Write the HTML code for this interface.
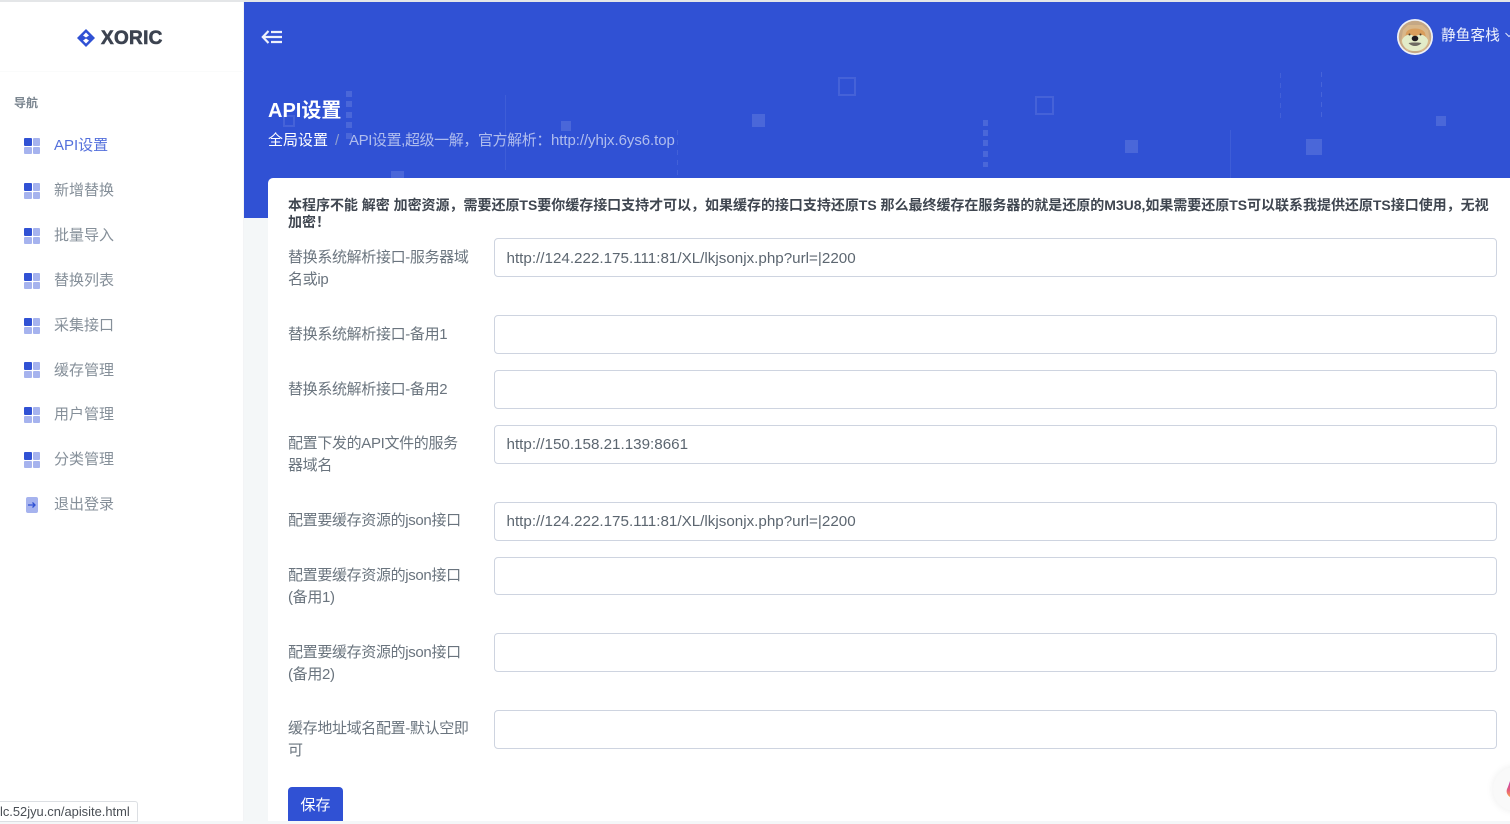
<!DOCTYPE html>
<html lang="zh"><head><meta charset="utf-8"><title>API设置</title>
<style>
*{box-sizing:border-box}
html,body{margin:0;padding:0;width:1510px;height:821px;overflow:hidden;background:#f4f7f8;font-family:"Liberation Sans","Noto Sans CJK SC",sans-serif;color:#6c757d}
.a{position:absolute;white-space:nowrap}
#top{left:0;top:0;width:1510px;height:2px;background:#e4e6e8}
#side{left:0;top:2px;width:244px;height:819px;background:#fff;border-right:1px solid #f3f4f6}
#hero{left:244px;top:2px;width:1266px;height:216px;background:#3051d4}
.d{position:absolute;background:rgba(255,255,255,.13)}
.l{position:absolute;background:rgba(255,255,255,.07)}
.o{position:absolute;border:2px solid rgba(255,255,255,.1)}
.nav{left:54px;font-size:15px;line-height:22px;color:#858f99}
.ic{position:absolute;left:24px;width:16px;height:16px}
.ic i{position:absolute;width:7.5px;height:7.5px;background:#a6b3ee;border-radius:1px}
.ic i:nth-child(1){left:0;top:0;background:#3051d4}.ic i:nth-child(2){left:8.5px;top:0}.ic i:nth-child(3){left:0;top:8.5px}.ic i:nth-child(4){left:8.5px;top:8.5px}
#card{left:268px;top:178px;width:1242px;height:643px;background:#fff;border-radius:5px 0 0 0}
.lb{left:288px;font-size:15px;line-height:22px;color:#6a747e;letter-spacing:-.34px}
.in{left:494px;width:1003px;height:39px;background:#fff;border:1px solid #ced4e0;border-radius:4px;padding:0 11.5px;line-height:38px;font-size:15.2px;color:#5c6670}
</style></head><body>
<div class="a" id="top"></div>
<div class="a" id="side"></div>
<div class="a" style="left:0;top:71px;width:244px;height:1px;background:#fafbfb"></div>
<svg class="a" style="left:76px;top:28px" width="20" height="20" viewBox="0 0 20 20"><path d="M10 1L19 10 10 19 1 10Z" fill="#3051d4"/><path d="M10 4.500L13 7.500 10 9.500 7 7.500ZM10 15.500L13 12.500 10 10.500 7 12.500Z" fill="#fff"/></svg>
<div class="a" style="left:101px;top:27px;font-size:19px;line-height:24px;font-weight:700;color:#3c4350;letter-spacing:.3px;-webkit-text-stroke:.6px #3c4350">XORIC</div>
<div class="a" style="left:14px;top:95px;font-size:12px;line-height:17px;font-weight:700;color:#7b8690">导航</div>

<div class="ic" style="top:138px"><i></i><i></i><i></i><i></i></div><div class="a nav" style="top:135px;color:#5470dc">API设置</div>
<div class="ic" style="top:183px"><i></i><i></i><i></i><i></i></div><div class="a nav" style="top:180px">新增替换</div>
<div class="ic" style="top:228px"><i></i><i></i><i></i><i></i></div><div class="a nav" style="top:225px">批量导入</div>
<div class="ic" style="top:273px"><i></i><i></i><i></i><i></i></div><div class="a nav" style="top:270px">替换列表</div>
<div class="ic" style="top:318px"><i></i><i></i><i></i><i></i></div><div class="a nav" style="top:315px">采集接口</div>
<div class="ic" style="top:362px"><i></i><i></i><i></i><i></i></div><div class="a nav" style="top:360px">缓存管理</div>
<div class="ic" style="top:407px"><i></i><i></i><i></i><i></i></div><div class="a nav" style="top:404px">用户管理</div>
<div class="ic" style="top:452px"><i></i><i></i><i></i><i></i></div><div class="a nav" style="top:449px">分类管理</div>
<svg class="a" style="left:26px;top:497px" width="12" height="16" viewBox="0 0 12 16"><rect width="12" height="16" rx="2" fill="#a6b3ee"/><path d="M2 8H9M6.500 5.500L9 8 6.500 10.500" fill="none" stroke="#3051d4" stroke-width="1.3"/></svg>
<div class="a nav" style="top:494px">退出登录</div>

<div class="a" id="hero"></div>
<div class="d" style="left:752px;top:114px;width:13px;height:13px"></div>
<div class="o" style="left:838px;top:77px;width:18px;height:19px"></div>
<div class="o" style="left:1035px;top:96px;width:19px;height:19px"></div>
<div class="d" style="left:983px;top:120px;width:5px;height:6px"></div>
<div class="d" style="left:983px;top:130px;width:5px;height:6px"></div>
<div class="d" style="left:983px;top:140px;width:5px;height:6px"></div>
<div class="d" style="left:983px;top:151px;width:5px;height:6px"></div>
<div class="d" style="left:983px;top:162px;width:5px;height:5px"></div>
<div class="d" style="left:1125px;top:140px;width:13px;height:13px"></div>
<div class="l" style="left:1230px;top:130px;width:1px;height:48px"></div>
<div class="a" style="left:1280px;top:73px;width:1px;height:47px;background:repeating-linear-gradient(180deg,rgba(255,255,255,.09) 0 5px,transparent 5px 10px)"></div>
<div class="a" style="left:1321px;top:72px;width:1px;height:47px;background:repeating-linear-gradient(180deg,rgba(255,255,255,.11) 0 5px,transparent 5px 10px)"></div>
<div class="d" style="left:1306px;top:139px;width:16px;height:16px"></div>
<div class="d" style="left:1436px;top:116px;width:10px;height:10px"></div>
<div class="d" style="left:346px;top:91px;width:6px;height:6px"></div>
<div class="d" style="left:346px;top:101px;width:6px;height:6px"></div>
<div class="d" style="left:346px;top:112px;width:6px;height:6px"></div>
<div class="d" style="left:346px;top:122px;width:6px;height:6px"></div>
<div class="d" style="left:346px;top:133px;width:6px;height:6px"></div>
<div class="o" style="left:283px;top:115px;width:12px;height:12px"></div>
<div class="d" style="left:561px;top:121px;width:10px;height:10px"></div>
<div class="d" style="left:391px;top:171px;width:13px;height:7px"></div>
<div class="l" style="left:505px;top:95px;width:1px;height:75px"></div>
<div class="a" style="left:677px;top:130px;width:1px;height:48px;background:repeating-linear-gradient(180deg,rgba(255,255,255,.09) 0 5px,transparent 5px 10px)"></div>

<svg class="a" style="left:261px;top:29px" width="21" height="16" viewBox="0 0 21 16"><path d="M7.500 2L1.800 8 7.500 14M2 8H21M10 3H21M10 13H21" fill="none" stroke="#eef1fc" stroke-width="2.200"/></svg>
<svg class="a" style="left:1397px;top:19px" width="36" height="36" viewBox="0 0 36 36">
<defs><clipPath id="c"><circle cx="18" cy="18" r="16.300"/></clipPath></defs>
<circle cx="18" cy="18" r="18" fill="#eef0f6"/>
<g clip-path="url(#c)"><rect width="36" height="36" fill="#c5a885"/>
<path d="M6 11L11 6 25 6 31 11 33 23 27 32 10 32 4 23Z" fill="#d8b78a"/>
<path d="M9 14C11 8 25 8 28 14L29 19 8 19Z" fill="#d99e5c"/>
<path d="M5 21C8 15 14 14 18 18 22 14 28 15 31 21 31 28 25 32 18 32 11 32 5 28 5 21Z" fill="#e3ecc9"/>
<circle cx="12.500" cy="15.500" r="1" fill="#4a3a2a"/><circle cx="23.500" cy="15.500" r="1" fill="#4a3a2a"/>
<ellipse cx="18" cy="19.500" rx="3.300" ry="2.800" fill="#1d1a20"/><path d="M11.500 24C15 28 21 28 24.500 24L21 23.500H15Z" fill="#6d6a62"/></g></svg>
<div class="a" style="left:1441px;top:26px;font-size:14.700px;line-height:21px;color:#eef1fc">静鱼客栈</div>
<svg class="a" style="left:1505px;top:32px" width="5" height="6" viewBox="0 0 5 6"><path d="M.5 1L4 4.500 5 3.500" fill="none" stroke="#dfe5fa" stroke-width="1"/></svg>

<div class="a" style="left:268px;top:97px;font-size:20px;line-height:28px;font-weight:700;color:#fff">API设置</div>
<div class="a" style="left:268px;top:130px;font-size:15px;line-height:22px;color:#fff">全局设置</div>
<div class="a" style="left:335px;top:130px;font-size:15px;line-height:22px;color:#8f9fd0">/</div>
<div class="a" style="left:349px;top:130px;font-size:15px;line-height:22px;color:#b0bdee;letter-spacing:-.4px">API设置,超级一解，官方解析：<span style="letter-spacing:-.06px">http://yhjx.6ys6.top</span></div>

<div class="a" id="card"></div>
<div class="a" style="left:288px;top:197px;width:1212px;white-space:normal;font-size:14px;line-height:17px;font-weight:700;color:#3f4650;letter-spacing:-.02px">本程序不能 解密 加密资源，需要还原TS要你缓存接口支持才可以，如果缓存的接口支持还原TS 那么最终缓存在服务器的就是还原的M3U8,如果需要还原TS可以联系我提供还原TS接口使用，无视<br>加密！</div>

<div class="a lb" style="top:247px">替换系统解析接口-服务器域<br>名或ip</div>
<div class="a in" style="top:238px;line-height:39px">http://124.222.175.111:81/XL/lkjsonjx.php?url=|2200</div>
<div class="a lb" style="top:324px">替换系统解析接口-备用1</div>
<div class="a in" style="top:315px"></div>
<div class="a lb" style="top:379px">替换系统解析接口-备用2</div>
<div class="a in" style="top:370px"></div>
<div class="a lb" style="top:433px">配置下发的API文件的服务<br>器域名</div>
<div class="a in" style="top:425px">http://150.158.21.139:8661</div>
<div class="a lb" style="top:510px">配置要缓存资源的json接口</div>
<div class="a in" style="top:502px">http://124.222.175.111:81/XL/lkjsonjx.php?url=|2200</div>
<div class="a lb" style="top:565px">配置要缓存资源的json接口<br>(备用1)</div>
<div class="a in" style="top:557px;height:38px"></div>
<div class="a lb" style="top:642px">配置要缓存资源的json接口<br>(备用2)</div>
<div class="a in" style="top:633px"></div>
<div class="a lb" style="top:718px">缓存地址域名配置-默认空即<br>可</div>
<div class="a in" style="top:710px"></div>

<div class="a" style="left:288px;top:787px;width:55px;height:34px;background:#3051d4;border-radius:4px 4px 0 0;color:#fff;font-size:15px;line-height:37px;text-align:center">保存</div>
<div class="a" style="left:-2px;top:801px;width:140px;height:21px;background:#fff;border:1px solid #dcdfe3;border-radius:0 3px 0 0;font-size:12.900px;line-height:20px;color:#4a4f55;padding-left:1px">lc.52jyu.cn/apisite.html</div>
<div class="a" style="left:1493px;top:767px;width:60px;height:44px;border-radius:22px;background:#f9f9f9;box-shadow:0 0 8px rgba(0,0,0,.08)"></div>
<svg class="a" style="left:1506px;top:781px" width="4" height="16" viewBox="0 0 4 16"><defs><linearGradient id="f" x1="0" y1="0" x2="0" y2="1"><stop offset="0" stop-color="#c040b0"/><stop offset=".6" stop-color="#e8607a"/><stop offset="1" stop-color="#f5a050"/></linearGradient></defs><path d="M4 0V16C1 14 0 11 1 8 2 6 3 3 4 0Z" fill="url(#f)"/></svg>
</body></html>
